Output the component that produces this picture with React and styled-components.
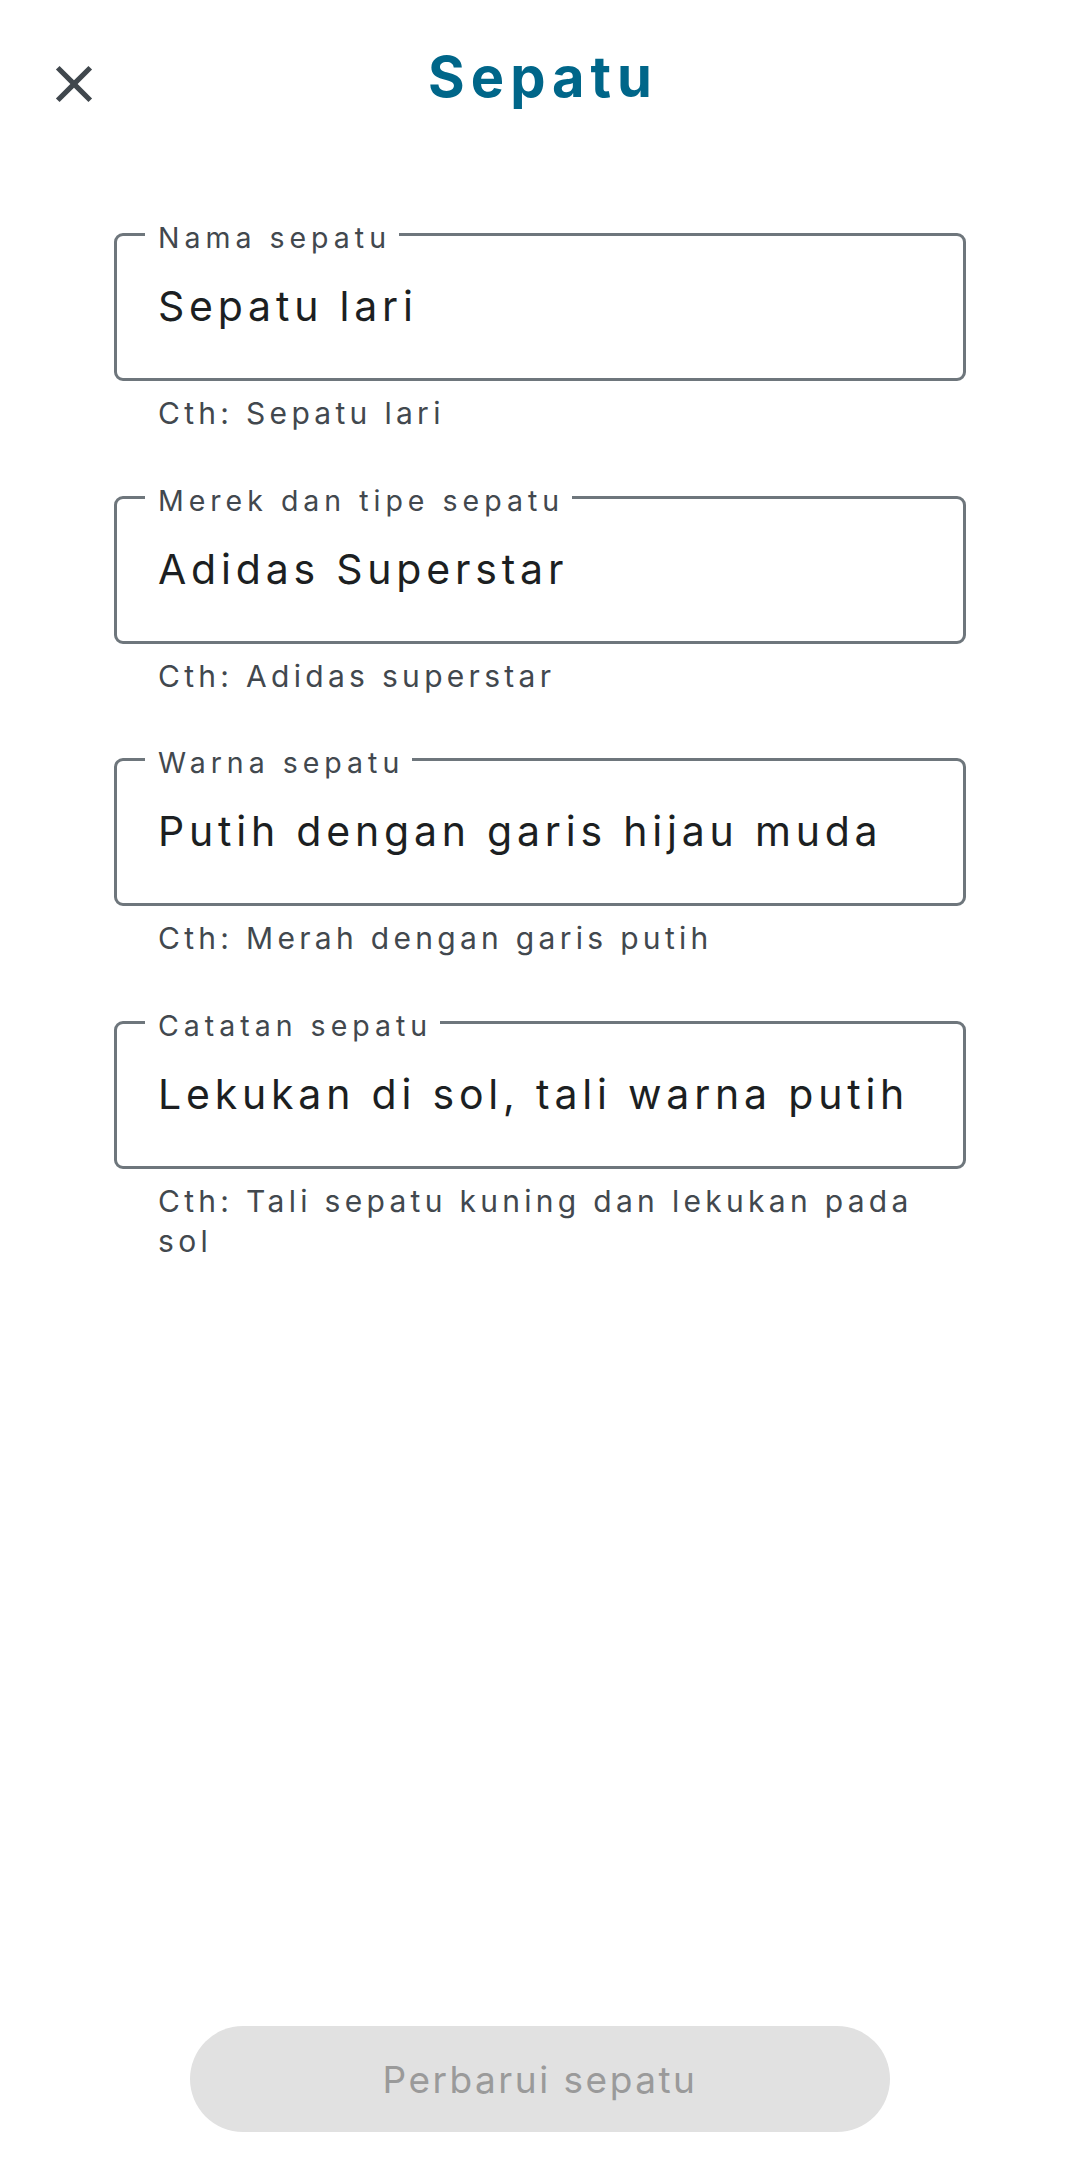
import React from "react";
import styled, { createGlobalStyle } from "styled-components";

const Global = createGlobalStyle`
  html, body { margin: 0; padding: 0; background: #ffffff; }
  body { font-family: "Inter", "Noto Sans", sans-serif; }
  * { box-sizing: border-box; }
`;

const Page = styled.div`
  min-height: 100vh;
  display: flex;
  flex-direction: column;
  padding-bottom: 52px;
`;

const Header = styled.header`
  display: grid;
  grid-template-columns: 1fr auto 1fr;
  align-items: start;
  padding-top: 45px;
`;

const CloseButton = styled.button`
  justify-self: start;
  margin: 8px 0 0 43px;
  width: 62px;
  height: 62px;
  padding: 0;
  border: 0;
  background: transparent;
  color: #40474d;
  display: flex;
  align-items: center;
  justify-content: center;
  cursor: pointer;
`;

const Title = styled.h1`
  margin: 0 -6px 0 0;
  font-family: "Inter", sans-serif;
  font-size: 56px;
  line-height: 64px;
  font-weight: 700;
  letter-spacing: 6px;
  color: #006689;
`;

const Form = styled.form`
  display: flex;
  flex-direction: column;
  gap: 46.7px;
  margin: 102px 114px 0;
`;

const Group = styled.div`
  display: flex;
  flex-direction: column;
`;

const Box = styled.fieldset`
  margin: 0;
  min-width: 0;
  padding: 30px 0 48px;
  border: 3px solid #6e767c;
  border-radius: 9px;
`;

const Label = styled.legend`
  margin-left: 28px;
  padding: 7px 8px 0 13px;
  font-size: 28.5px;
  line-height: 28px;
  letter-spacing: 5px;
  color: #42484e;
`;

const Value = styled.input`
  display: block;
  width: 100%;
  height: 48px;
  margin: 0;
  padding: 0 41px;
  border: 0;
  outline: none;
  background: transparent;
  font-family: "Inter", sans-serif;
  font-size: 41px;
  line-height: 48px;
  letter-spacing: 4.8px;
  color: #1c1f22;
`;

const Helper = styled.div`
  padding: 12px 24px 0 44px;
  font-size: 30px;
  line-height: 40px;
  letter-spacing: 4.3px;
  color: #42484e;
`;

const Submit = styled.button`
  margin: auto auto 0;
  width: 700px;
  height: 106px;
  border: 0;
  border-radius: 53px;
  background: #e1e1e1;
  color: #9a9a9a;
  font-family: "Inter", sans-serif;
  font-size: 37px;
  letter-spacing: 2.5px;
  display: flex;
  align-items: center;
  justify-content: center;
`;

const fields = [
  { label: "Nama sepatu", value: "Sepatu lari", hint: "Cth: Sepatu lari" },
  { label: "Merek dan tipe sepatu", value: "Adidas Superstar", hint: "Cth: Adidas superstar" },
  { label: "Warna sepatu", value: "Putih dengan garis hijau muda", hint: "Cth: Merah dengan garis putih" },
  { label: "Catatan sepatu", value: "Lekukan di sol, tali warna putih", hint: "Cth: Tali sepatu kuning dan lekukan pada sol" },
];

function CloseIcon() {
  return (
    <svg width="62" height="62" viewBox="0 0 24 24" fill="currentColor">
      <path d="M19 6.41L17.59 5 12 10.59 6.41 5 5 6.41 10.59 12 5 17.59 6.41 19 12 13.41 17.59 19 19 17.59 13.41 12z" />
    </svg>
  );
}

export default function App() {
  return (
    <>
      <Global />
      <Page>
        <Header>
          <CloseButton aria-label="Tutup">
            <CloseIcon />
          </CloseButton>
          <Title>Sepatu</Title>
          <span />
        </Header>
        <Form onSubmit={(e) => e.preventDefault()}>
          {fields.map((f) => (
            <Group key={f.label}>
              <Box>
                <Label>{f.label}</Label>
                <Value readOnly defaultValue={f.value} />
              </Box>
              <Helper>{f.hint}</Helper>
            </Group>
          ))}
        </Form>
        <Submit type="button" disabled>
          Perbarui sepatu
        </Submit>
      </Page>
    </>
  );
}
